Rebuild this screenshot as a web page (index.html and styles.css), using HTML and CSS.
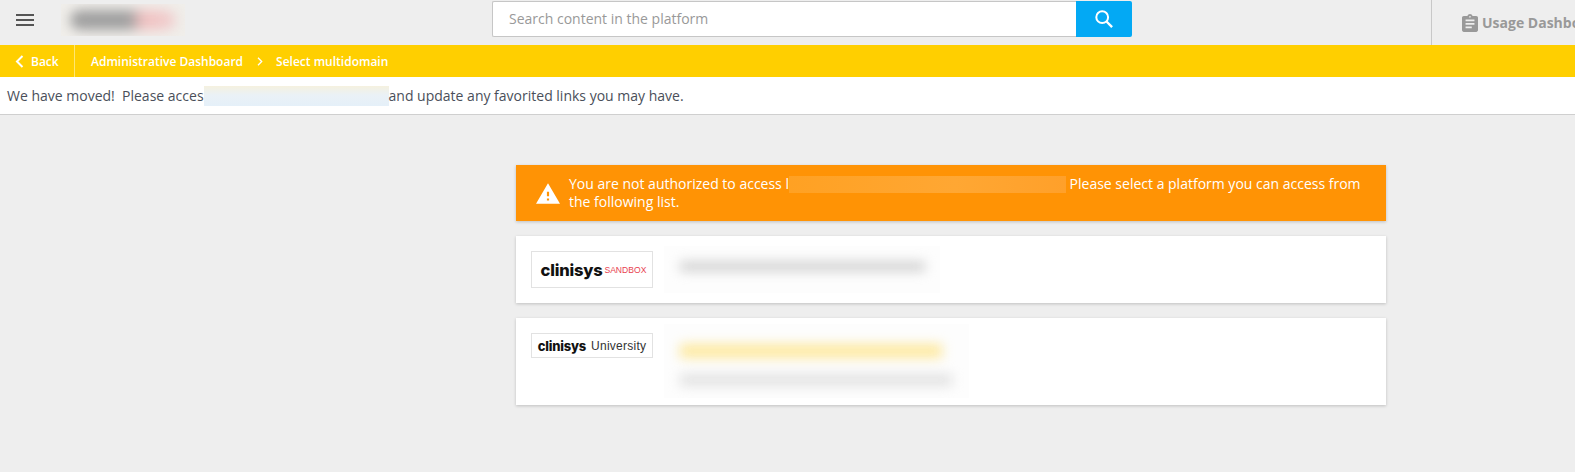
FILE: index.html
```html
<!DOCTYPE html>
<html lang="en">
<head>
<meta charset="utf-8">
<title>Select multidomain</title>
<link rel="stylesheet" href="styles.css">
</head>
<body>
<header class="topbar">
  <button class="menu-btn" aria-label="Menu">
    <svg width="18" height="12" viewBox="0 0 18 12"><path d="M0 0h18v2H0zM0 5h18v2H0zM0 10h18v2H0z" fill="#555"/></svg>
  </button>
  <div class="brand"><span class="brand-blur"></span></div>
  <form class="search">
    <div class="search-input">Search content in the platform</div>
    <div class="search-btn">
      <svg width="20" height="20" viewBox="0 0 20 20" fill="none" stroke="#fff"><circle cx="8.2" cy="8.2" r="5.9" stroke-width="2"/><path d="M12.5 12.5l5.6 5.6" stroke-width="2.4"/></svg>
    </div>
  </form>
  <div class="usage">
    <svg class="usage-icon" width="16" height="18" viewBox="3 1 18 20"><path fill="#999" d="M19 3h-4.18C14.4 1.84 13.3 1 12 1c-1.3 0-2.4.84-2.82 2H5c-1.1 0-2 .9-2 2v14c0 1.1.9 2 2 2h14c1.1 0 2-.9 2-2V5c0-1.1-.9-2-2-2zm-7 0c.55 0 1 .45 1 1s-.45 1-1 1-1-.45-1-1 .45-1 1-1zm2 14H7v-2h7v2zm3-4H7v-2h10v2zm0-4H7V7h10v2z"/></svg>
    <span>Usage Dashboard</span>
  </div>
</header>

<nav class="crumbbar">
  <a class="back">
    <svg width="9" height="13" viewBox="0 0 9 13" fill="none" stroke="#fff" stroke-width="2"><path d="M7.5 1L2 6.5 7.5 12"/></svg>
    <span>Back</span>
  </a>
  <div class="crumbs">
    <span>Administrative Dashboard</span>
    <svg width="6" height="9" viewBox="0 0 6 9" fill="none" stroke="#fff" stroke-width="1.3"><path d="M1 .8l3.7 3.7L1 8.2"/></svg>
    <span>Select multidomain</span>
  </div>
</nav>

<div class="notice">
  <span>We have moved!&nbsp; Please acces</span><span class="redact-notice"></span><span>and update any favorited links you may have.</span>
</div>

<main class="content">
  <div class="alert">
    <svg class="alert-icon" width="24" height="21" viewBox="1 2 22 19"><path fill="#fff" d="M1 21h22L12 2 1 21zm12-3h-2v-2h2v2zm0-4h-2v-4h2v4z"/></svg>
    <p class="alert-text">You are not authorized to access l<span class="redact-alert"></span> Please select a platform you can access from the following list.</p>
  </div>

  <section class="card card-a">
    <div class="logo logo-a"><span class="mark">clinisys</span><span class="sandbox">SANDBOX</span></div>
    <div class="card-blur blur-a"><span class="line line-a"></span></div>
  </section>

  <section class="card card-b">
    <div class="logo logo-b"><span class="mark mark-b">clinisys</span><span class="univ">University</span></div>
    <div class="card-blur blur-b"><span class="line line-y"></span><span class="line line-g"></span></div>
  </section>
</main>
</body>
</html>
```
FILE: styles.css
```css
* { box-sizing: border-box; }
html, body { margin: 0; height: 100%; }
body {
  background: #eeeeee;
  font-family: "Open Sans", "Liberation Sans", sans-serif;
  font-size: 14px;
  color: #4a4f5a;
  overflow: hidden;
}

.topbar { display: flex; align-items: flex-start; height: 45px; background: #eeeeee; }
.menu-btn { flex: none; width: 61px; height: 39px; margin: 0; padding: 0 0 0 16px; border: 0; background: none; display: flex; align-items: center; }
.brand { flex: none; width: 124px; height: 32px; margin-top: 4px; background: #f0eeea; overflow: hidden; padding: 6px 9px; }
.brand-blur { display: block; width: 100%; height: 20px; border-radius: 10px; background: linear-gradient(90deg, #a0a0a0 0, #a0a0a0 56%, #f0c0c0 68%, #f0d0d0 100%); filter: blur(6px); }

.search { flex: none; display: flex; width: 640px; height: 36px; margin: 1px 0 0 307px; }
.search-input { flex: 1; background: #fff; border: 1px solid #c6c6c6; border-right: 0; border-radius: 2px 0 0 2px; padding: 0 16px; line-height: 34px; color: #999; font-size: 14px; }
.search-btn { flex: none; width: 56px; background: #03a9f4; border-radius: 0 2px 2px 0; display: flex; align-items: center; justify-content: center; }

.usage { flex: none; display: flex; align-items: center; gap: 4px; height: 45px; margin-left: 299px; padding-left: 30px; border-left: 1px solid #c8c8c8; color: #999; font-weight: 700; font-size: 14px; white-space: nowrap; }
.usage-icon { flex: none; }

.crumbbar { display: flex; height: 32px; background: #ffcf00; color: #fff; font-size: 12px; font-weight: 600; }
.back { flex: none; display: flex; align-items: center; gap: 7px; width: 75px; padding-left: 15px; border-right: 1px solid #ffe672; }
.crumbs { display: flex; align-items: center; gap: 13.5px; padding-left: 16px; }

.notice { display: flex; align-items: center; height: 38px; padding-left: 7px; background: #fff; border-bottom: 1px solid #cfcfcf; white-space: pre; }
.redact-notice { display: block; width: 185px; height: 20px; background: linear-gradient(180deg, #f5f1df 0, #eaf1f6 45%, #e5f0f9 100%); }

.content { display: flex; flex-direction: column; gap: 15px; padding: 50px 189px 0 516px; }

.alert { display: flex; align-items: center; height: 56px; padding: 0 20px; background: #ff9305; color: #fff; box-shadow: 0 1px 3px rgba(0,0,0,.2); }
.alert-icon { flex: none; margin-right: 9px; }
.alert-text { margin: 0; line-height: 18px; }
.redact-alert { display: inline-block; width: 277px; height: 17px; vertical-align: -4px; background: linear-gradient(90deg, #ffa123, #ffa733 60%, #ffa02a); }

.card { display: flex; align-items: flex-start; background: #fff; box-shadow: 0 1px 3px rgba(0,0,0,.2); padding: 15px; }
.card-a { height: 67px; }
.card-b { height: 87px; }

.logo { flex: none; display: flex; align-items: center; justify-content: center; width: 122px; border: 1px solid #e2e2e2; background: #fff; color: #111; white-space: nowrap; }
.logo-a { height: 37px; gap: 2px; padding-left: 3px; }
.logo-b { height: 25px; gap: 5px; }
.mark { font-family: Inter, "Liberation Sans", sans-serif; font-weight: 800; font-size: 16.5px; letter-spacing: -.2px; }
.mark-b { font-size: 13px; }
.sandbox { font-family: "Liberation Sans", sans-serif; font-size: 8.6px; color: #e8424f; }
.univ { font-family: "Liberation Sans", sans-serif; font-size: 12px; color: #333; letter-spacing: .25px; }

.card-blur { flex: none; display: flex; flex-direction: column; background: #fdfdfd; overflow: hidden; margin-left: 11px; }
.blur-a { width: 276px; height: 47px; margin-top: -5px; padding: 16px 16px 0; }
.blur-b { width: 305px; height: 74px; margin-top: -9px; padding: 20px 16px 0; gap: 16px; }
.line { display: block; filter: blur(6px); }
.line-a { width: 245px; height: 9px; background: #cdcdcd; }
.line-y { width: 262px; height: 14px; background: #fde9a0; }
.line-g { width: 272px; height: 12px; background: #e2e2e2; }
```
